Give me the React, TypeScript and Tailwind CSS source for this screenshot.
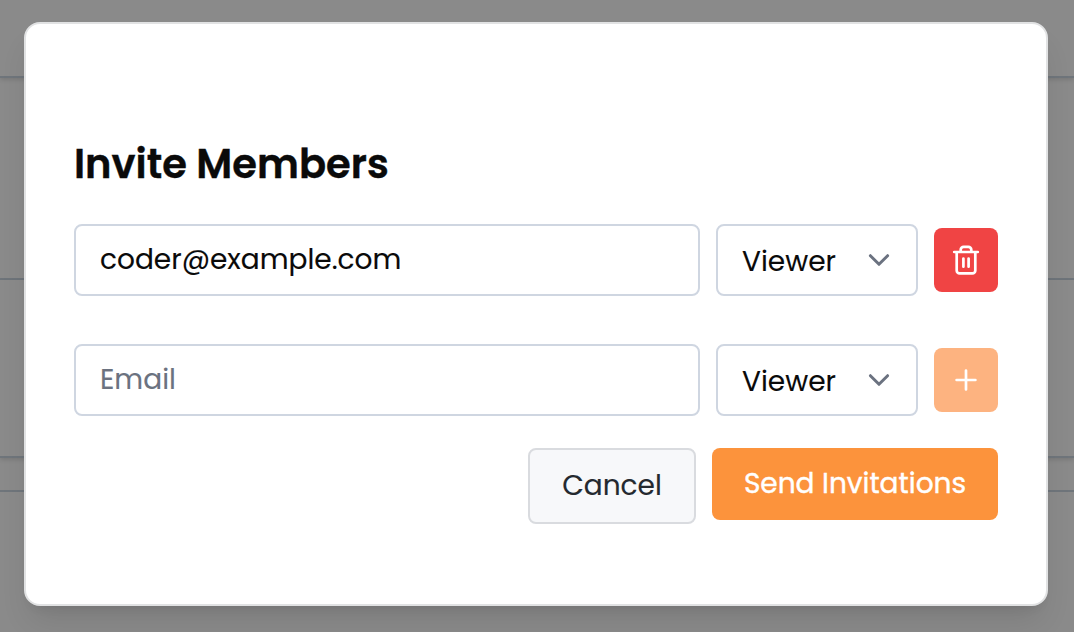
import { useState } from "react";

function Chevron() {
  return (
    <svg className="h-6 w-6 shrink-0" viewBox="0 0 24 24" fill="none" stroke="#6b7280" strokeWidth="3" strokeLinecap="round" strokeLinejoin="round">
      <path d="M3.4 7.7 12 16.3l8.6-8.6" />
    </svg>
  );
}

function TrashIcon() {
  return (
    <svg className="h-8 w-8" viewBox="0 0 32 32" fill="none" stroke="white" strokeWidth="2.7" strokeLinecap="round" strokeLinejoin="round">
      <path d="M4.2 8h23.6M6.7 8v18.4a2.9 2.9 0 0 0 2.9 2.9h12.8a2.9 2.9 0 0 0 2.9-2.9V8M10.7 8V5.8a2.9 2.9 0 0 1 2.9-2.9h4.8a2.9 2.9 0 0 1 2.9 2.9V8M13.4 14.5v8.2M18.6 14.5v8.2" />
    </svg>
  );
}

function PlusIcon() {
  return (
    <svg className="h-8 w-8" viewBox="0 0 32 32" fill="none" stroke="white" strokeWidth="2.7" strokeLinecap="round">
      <path d="M6.6 16h18.8M16 6.6v18.8" />
    </svg>
  );
}

function RoleSelect() {
  return (
    <button type="button" className="flex h-[72px] w-[202px] items-center justify-between rounded-lg border-2 border-[#cfd6e1] bg-white pr-[25px] pl-6 text-[#0a0a0a] [-webkit-text-stroke:0.12px]">
      <span className="pt-1 text-[28px]">Viewer</span>
      <Chevron />
    </button>
  );
}

const inputClass =
  "h-[72px] w-[626px] rounded-lg border-2 border-[#cfd6e1] bg-white px-6 text-[28px] text-[#0a0a0a] outline-none [-webkit-text-stroke:0.12px] placeholder:text-[#6b7280]";

export default function App() {
  const [first, setFirst] = useState("coder@example.com");
  const [second, setSecond] = useState("");
  return (
    <div className="relative h-[632px] w-[1074px] overflow-hidden bg-[#8a8a8a] font-['Poppins','Inter',sans-serif]">
      <div className="flex h-full flex-col">
        <div className="h-[78px] shrink-0 border-b-2 border-[#6f757b] shadow-[0_2px_4px_rgba(0,0,0,0.12)]" />
        <div className="h-[202px] shrink-0 border-b-2 border-[#6f757b]" />
        <div className="h-[178px] shrink-0 border-b-2 border-[#6f757b] shadow-[0_2px_4px_rgba(0,0,0,0.12)]" />
        <div className="h-[34px] shrink-0 border-b-2 border-[#6f757b]" />
      </div>
      <section role="dialog" className="absolute top-[22px] left-6 flex h-[584px] w-[1024px] flex-col rounded-2xl border-2 border-[#e1e2e3] bg-white px-12 pt-[120px] shadow-[0_20px_30px_-6px_rgba(0,0,0,0.1),0_8px_12px_-8px_rgba(0,0,0,0.1)]">
        <h2 className="h-20 text-[40px] leading-10 font-semibold text-[#0a0a0a] [-webkit-text-stroke:0.4px]">Invite Members</h2>
        <div className="flex items-center gap-4">
          <input aria-label="Email" value={first} onChange={(e) => setFirst(e.target.value)} className={inputClass} />
          <RoleSelect />
          <button type="button" className="flex size-16 items-center justify-center rounded-lg bg-[#f04444]">
            <TrashIcon />
          </button>
        </div>
        <div className="mt-12 flex items-center gap-4">
          <input placeholder="Email" value={second} onChange={(e) => setSecond(e.target.value)} className={inputClass} />
          <RoleSelect />
          <button type="button" className="flex size-16 items-center justify-center rounded-lg bg-[#fdb380]">
            <PlusIcon />
          </button>
        </div>
        <div className="mt-8 flex items-start justify-end gap-4">
          <button type="button" className="h-[76px] w-[168px] rounded-lg border-2 border-[#d9dbdf] bg-[#f7f8fa] text-[28px] text-[#24292f] [-webkit-text-stroke:0.12px]">Cancel</button>
          <button type="button" className="h-[72px] w-[286px] rounded-lg bg-[#fc933c] text-[28px] text-white [-webkit-text-stroke:0.4px]">Send Invitations</button>
        </div>
      </section>
    </div>
  );
}
